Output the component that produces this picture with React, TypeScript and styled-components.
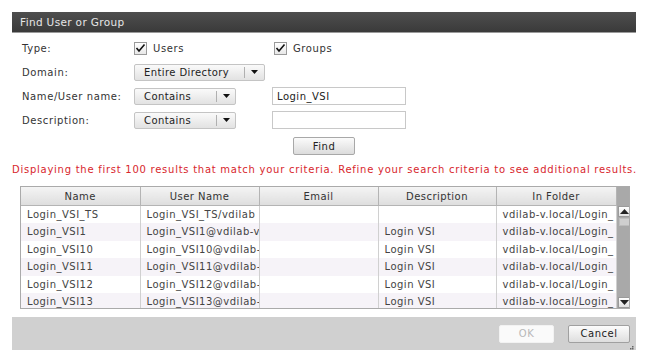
import React from 'react';
import styled, { createGlobalStyle } from 'styled-components';

const GlobalStyle = createGlobalStyle`
  body {
    margin: 0;
    background: #ffffff;
    font-family: 'DejaVu Sans', Verdana, sans-serif;
    color: #333333;
  }
`;

type Row = { name: string; user: string; email: string; desc: string; folder: string };

const rows: Row[] = [
  { name: 'Login_VSI_TS', user: 'Login_VSI_TS/vdilab', email: '', desc: '', folder: 'vdilab-v.local/Login_' },
  { name: 'Login_VSI1', user: 'Login_VSI1@vdilab-v', email: '', desc: 'Login VSI', folder: 'vdilab-v.local/Login_' },
  { name: 'Login_VSI10', user: 'Login_VSI10@vdilab-', email: '', desc: 'Login VSI', folder: 'vdilab-v.local/Login_' },
  { name: 'Login_VSI11', user: 'Login_VSI11@vdilab-', email: '', desc: 'Login VSI', folder: 'vdilab-v.local/Login_' },
  { name: 'Login_VSI12', user: 'Login_VSI12@vdilab-', email: '', desc: 'Login VSI', folder: 'vdilab-v.local/Login_' },
  { name: 'Login_VSI13', user: 'Login_VSI13@vdilab-', email: '', desc: 'Login VSI', folder: 'vdilab-v.local/Login_' },
];

export default function App() {
  return (
    <>
      <GlobalStyle />
      <Dialog>
        <TitleBar>Find User or Group</TitleBar>
        <Form>
          <Label>Type:</Label>
          <CheckField>
            <Checkbox />
            Users
          </CheckField>
          <CheckField $offset={2}>
            <Checkbox />
            Groups
          </CheckField>

          <Label>Domain:</Label>
          <Select $width={131} $split={110}>
            <span>Entire Directory</span>
            <Arrow />
          </Select>
          <span />

          <Label>Name/User name:</Label>
          <Select $width={102} $split={82}>
            <span>Contains</span>
            <Arrow />
          </Select>
          <TextBox>Login_VSI</TextBox>

          <Label>Description:</Label>
          <Select $width={102} $split={82}>
            <span>Contains</span>
            <Arrow />
          </Select>
          <TextBox />

          <span />
          <span />
          <FindButton>Find</FindButton>
        </Form>

        <Notice>
          Displaying the first 100 results that match your criteria. Refine your search criteria to see additional
          results.
        </Notice>

        <TableWrap>
          <Table>
            <colgroup>
              <col style={{ width: 119 }} />
              <col style={{ width: 119 }} />
              <col style={{ width: 119 }} />
              <col style={{ width: 118 }} />
              <col style={{ width: 120 }} />
            </colgroup>
            <thead>
              <tr>
                <Th>Name</Th>
                <Th>User Name</Th>
                <Th>Email</Th>
                <Th>Description</Th>
                <Th>In Folder</Th>
              </tr>
            </thead>
            <tbody>
              {rows.map((r, i) => (
                <Tr key={r.name} $alt={i % 2 === 1}>
                  <Td>{r.name}</Td>
                  <Td>{r.user}</Td>
                  <Td>{r.email}</Td>
                  <Td>{r.desc}</Td>
                  <Td>{r.folder}</Td>
                </Tr>
              ))}
            </tbody>
          </Table>
          <ScrollBar>
            <ScrollButton>
              <svg width="9" height="5" viewBox="0 0 9 5">
                <path d="M0 5 L4.5 0 L9 5 Z" fill="#222" />
              </svg>
            </ScrollButton>
            <Thumb />
            <Track />
            <ScrollButton>
              <svg width="9" height="5" viewBox="0 0 9 5">
                <path d="M0 0 L4.5 5 L9 0 Z" fill="#222" />
              </svg>
            </ScrollButton>
          </ScrollBar>
        </TableWrap>

        <Footer>
          <FooterButton $disabled>OK</FooterButton>
          <FooterButton>Cancel</FooterButton>
          <Grip>
            <svg width="6" height="6" viewBox="0 0 6 6">
              <rect x="4" y="0" width="1.5" height="1.5" fill="#666" />
              <rect x="2" y="2" width="1.5" height="1.5" fill="#666" />
              <rect x="4" y="2" width="1.5" height="1.5" fill="#666" />
              <rect x="0" y="4" width="1.5" height="1.5" fill="#666" />
              <rect x="2" y="4" width="1.5" height="1.5" fill="#666" />
              <rect x="4" y="4" width="1.5" height="1.5" fill="#666" />
            </svg>
          </Grip>
        </Footer>
      </Dialog>
    </>
  );
}

function Checkbox() {
  return (
    <Box>
      <svg width="11" height="10" viewBox="0 0 11 10">
        <path d="M1.5 5 L4 8 L9.5 1.5" stroke="#111" strokeWidth="1.6" fill="none" />
      </svg>
    </Box>
  );
}

function Arrow() {
  return (
    <svg width="7" height="4" viewBox="0 0 7 4">
      <path d="M0 0 L7 0 L3.5 4 Z" fill="#111" />
    </svg>
  );
}

const Dialog = styled.div`
  position: relative;
  margin: 12px 0 0 12px;
  width: 624px;
  display: flex;
  flex-direction: column;
  font-size: 10px;
`;

const TitleBar = styled.div`
  height: 20px;
  line-height: 20px;
  padding-left: 8px;
  color: #e6e6e6;
  font-size: 10.5px;
  letter-spacing: 0.35px;
  background: linear-gradient(#4e4e4e, #3a3a3a);
  border-bottom: 1px solid #9a9a9a;
`;

const Form = styled.div`
  display: grid;
  grid-template-columns: 112px 138px 1fr;
  grid-auto-rows: 24px;
  align-items: center;
  padding: 3px 0 0 10px;
  letter-spacing: 0.6px;
`;

const Label = styled.div`
  font-size: 10px;
  color: #333;
`;

const CheckField = styled.label<{ $offset?: number }>`
  display: flex;
  align-items: center;
  gap: 6px;
  margin-left: ${(p) => p.$offset ?? 0}px;
  color: #333;
`;

const Box = styled.span`
  width: 11px;
  height: 11px;
  border: 1px solid #9a9a9a;
  background: linear-gradient(#ffffff, #e8e8e8);
  display: inline-flex;
  align-items: center;
  justify-content: center;
`;

const Select = styled.div<{ $width: number; $split: number }>`
  width: ${(p) => p.$width}px;
  height: 17px;
  box-sizing: border-box;
  display: grid;
  grid-template-columns: ${(p) => p.$split}px 1fr;
  align-items: center;
  border: 1px solid #c4c4c4;
  border-radius: 2px;
  background: linear-gradient(#fafafa, #e2e2e2);
  color: #222;
  letter-spacing: 0.4px;

  & > span {
    padding-left: 9px;
    border-right: 1px solid #b0b0b0;
    line-height: 11px;
  }
  & > svg {
    justify-self: center;
  }
`;

const TextBox = styled.div`
  width: 134px;
  height: 18px;
  box-sizing: border-box;
  border: 1px solid #c8c8c8;
  padding-left: 4px;
  display: flex;
  align-items: center;
  font-size: 10px;
  letter-spacing: 0.5px;
  color: #222;
  background: #ffffff;
`;

const FindButton = styled.button`
  width: 62px;
  height: 18px;
  margin: 5px 0 0 21px;
  align-self: start;
  border: 1px solid #a8a8a8;
  border-radius: 2px;
  background: linear-gradient(#fbfbfb, #dcdcdc);
  font-family: 'DejaVu Sans', Verdana, sans-serif;
  font-size: 10px;
  letter-spacing: 0.5px;
  color: #222;
  padding: 0;
`;

const Notice = styled.div`
  margin-top: 8px;
  color: #d8262c;
  font-size: 10px;
  letter-spacing: 0.74px;
  white-space: nowrap;
`;

const TableWrap = styled.div`
  margin: 11px 0 0 8px;
  width: 610px;
  height: 123px;
  box-sizing: border-box;
  border: 1px solid #aaaaaa;
  display: flex;
  overflow: hidden;
`;

const Table = styled.table`
  width: 595px;
  border-collapse: collapse;
  table-layout: fixed;
  font-size: 10px;
`;

const Th = styled.th`
  height: 18px;
  padding: 0;
  font-weight: normal;
  color: #333;
  background: linear-gradient(#f4f4f4, #dedede);
  border-right: 1px solid #b4b4b4;
  border-bottom: 1px solid #b4b4b4;
  letter-spacing: 0.45px;
`;

const Tr = styled.tr<{ $alt: boolean }>`
  height: 17.5px;
  background: ${(p) => (p.$alt ? '#f6f3f8' : '#ffffff')};
`;

const Td = styled.td`
  padding: 0 0 0 6px;
  border-right: 1px solid #d0d0d0;
  white-space: nowrap;
  overflow: hidden;
  text-overflow: clip;
  color: #444;
  letter-spacing: 0.5px;
`;

const ScrollBar = styled.div`
  width: 15px;
  flex: none;
  display: flex;
  flex-direction: column;
  align-items: center;
  background: #a9a9a9;
  padding-top: 19px;
  box-sizing: border-box;
`;

const ScrollButton = styled.div`
  width: 13px;
  height: 11px;
  flex: none;
  background: linear-gradient(#ffffff, #e0e0e0);
  border: 1px solid #9a9a9a;
  box-sizing: border-box;
  display: flex;
  align-items: center;
  justify-content: center;
`;

const Thumb = styled.div`
  width: 11px;
  height: 8px;
  flex: none;
  margin-top: 1px;
  background: #cfcfcf;
  border: 1px solid #bdbdbd;
  box-sizing: border-box;
`;

const Track = styled.div`
  flex: 1;
`;

const Footer = styled.div`
  position: relative;
  margin-top: 8px;
  height: 33px;
  background: #d0d0d0;
  display: flex;
  justify-content: flex-end;
  align-items: center;
  gap: 14px;
  padding-right: 6px;
`;

const FooterButton = styled.button<{ $disabled?: boolean }>`
  height: 18px;
  width: ${(p) => (p.$disabled ? 55 : 62)}px;
  padding: 0;
  border: 1px solid ${(p) => (p.$disabled ? '#f2f2f2' : '#a0a0a0')};
  border-radius: 2px;
  background: ${(p) => (p.$disabled ? '#fafafa' : 'linear-gradient(#fcfcfc, #dedede)')};
  color: ${(p) => (p.$disabled ? '#b8b8b8' : '#222')};
  font-family: 'DejaVu Sans', Verdana, sans-serif;
  font-size: 10px;
  letter-spacing: 0.5px;
`;

const Grip = styled.div`
  position: absolute;
  right: 2px;
  bottom: -2px;
  line-height: 0;
`;
